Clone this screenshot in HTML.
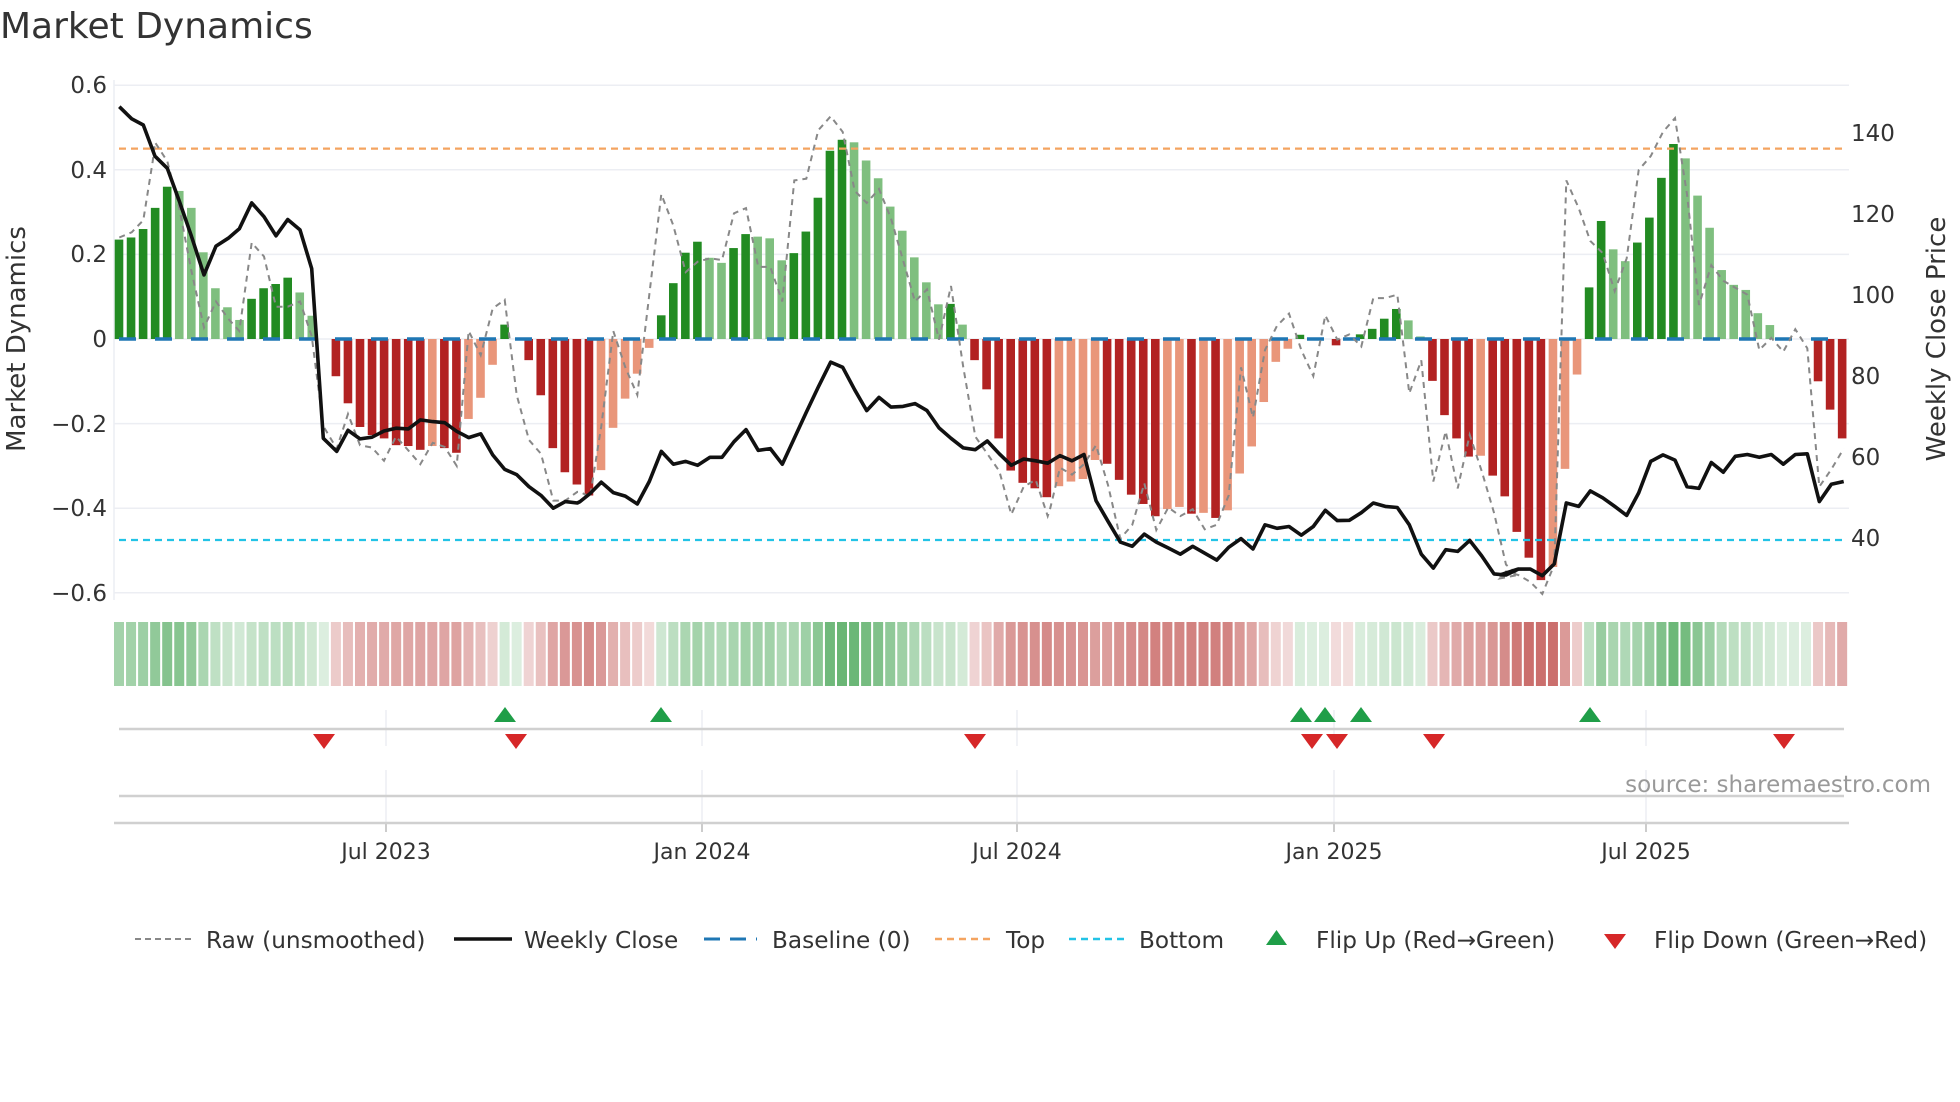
<!DOCTYPE html>
<html><head><meta charset="utf-8"><style>
html,body{margin:0;padding:0;background:#fff;}
svg{display:block;font-family:"DejaVu Sans","Liberation Sans",sans-serif;}
</style></head><body>
<svg id="s" width="1960" height="1102" viewBox="0 0 1960 1102" xmlns="http://www.w3.org/2000/svg">
<rect width="1960" height="1102" fill="#fff"/>
<text x="0" y="38" font-size="36" fill="#333">Market Dynamics</text>
<g id="grid" stroke="#eceef3" stroke-width="1.5"></g>
<g id="heat"></g>
<g id="bars"></g>
<g id="lines"></g>
<g font-size="23" fill="#333" text-anchor="end">
<text x="107" y="93">0.6</text><text x="107" y="178">0.4</text><text x="107" y="262">0.2</text><text x="107" y="347">0</text><text x="107" y="432">−0.2</text><text x="107" y="516">−0.4</text><text x="107" y="601">−0.6</text>
</g>
<g font-size="23" fill="#333">
<text x="1851" y="141">140</text><text x="1851" y="222">120</text><text x="1851" y="303">100</text><text x="1851" y="384">80</text><text x="1851" y="465">60</text><text x="1851" y="546">40</text>
</g>
<text transform="translate(25,339) rotate(-90)" font-size="26" fill="#333" text-anchor="middle">Market Dynamics</text>
<text transform="translate(1945,339) rotate(-90)" font-size="26" fill="#333" text-anchor="middle">Weekly Close Price</text>
<g font-size="22" fill="#333" text-anchor="middle">
<text x="386" y="859">Jul 2023</text><text x="702" y="859">Jan 2024</text><text x="1017" y="859">Jul 2024</text><text x="1334" y="859">Jan 2025</text><text x="1646" y="859">Jul 2025</text>
</g>
<text x="1931" y="792" font-size="23" fill="#999" text-anchor="end">source: sharemaestro.com</text>
<g id="legend" font-size="23.2" fill="#333">
<line x1="135" y1="939" x2="191" y2="939" stroke="#888" stroke-width="2" stroke-dasharray="6,4"/><text x="206" y="948">Raw (unsmoothed)</text>
<line x1="454" y1="939" x2="512" y2="939" stroke="#111" stroke-width="3.5"/><text x="524" y="948">Weekly Close</text>
<line x1="704" y1="939" x2="757" y2="939" stroke="#1f77b4" stroke-width="3" stroke-dasharray="16,10"/><text x="772" y="948">Baseline (0)</text>
<line x1="935" y1="939" x2="991" y2="939" stroke="#f4a460" stroke-width="2.5" stroke-dasharray="7,5"/><text x="1006" y="948">Top</text>
<line x1="1069" y1="939" x2="1125" y2="939" stroke="#22c3e6" stroke-width="2.5" stroke-dasharray="7,5"/><text x="1139" y="948">Bottom</text>
<polygon points="1266,945 1287,945 1276.5,930" fill="#1f9e48"/><text x="1316" y="948">Flip Up (Red→Green)</text>
<polygon points="1604,934 1626,934 1615,949" fill="#d62728"/><text x="1654" y="948">Flip Down (Green→Red)</text>
</g>
<g id="marks"></g>
</svg>
<script>
var NS="http://www.w3.org/2000/svg";
function el(p,t,a){var e=document.createElementNS(NS,t);for(var k in a)e.setAttribute(k,a[k]);document.getElementById(p).appendChild(e);return e;}
function Y(v){return 339-v*423;}
[0.6,0.4,0.2,0,-0.2,-0.4,-0.6].forEach(function(v){el("grid","line",{x1:114,x2:1849,y1:Y(v),y2:Y(v)});});
el("grid","line",{x1:114,x2:114,y1:80,y2:600});
[386,702,1017,1334,1646].forEach(function(x){el("grid","line",{x1:x,x2:x,y1:710,y2:746});el("grid","line",{x1:x,x2:x,y1:770,y2:823});el("grid","line",{x1:x,x2:x,y1:823,y2:832,stroke:"#bbb"});});
el("grid","line",{x1:119,x2:1844,y1:729,y2:729,stroke:"#d0d0d0","stroke-width":2.5});
el("grid","line",{x1:119,x2:1844,y1:796,y2:796,stroke:"#d0d0d0","stroke-width":2.5});
el("grid","line",{x1:114,x2:1849,y1:823,y2:823,stroke:"#d0d0d0","stroke-width":2.5});
var B=[[.235,1],[.24,1],[.26,1],[.31,1],[.36,1],[.35,0],[.31,0],[.205,0],[.12,0],[.075,0],[.045,0],[.095,1],[.12,1],[.13,1],[.145,1],[.11,0],[.055,0],
[0,0],[-.088,1],[-.152,1],[-.208,1],[-.227,1],[-.235,1],[-.251,1],[-.253,1],[-.262,1],[-.253,0],[-.258,1],[-.269,1],[-.189,0],[-.139,0],[-.061,0],[.034,1],[0,0],[-.05,1],[-.133,1],[-.258,1],[-.315,1],[-.344,1],
[-.37,1],[-.31,0],[-.21,0],[-.141,0],[-.082,0],[-.021,0],[.056,1],[.132,1],[.204,1],[.23,1],[.192,0],[.18,0],[.215,1],[.248,1],[.242,0],[.238,0],[.186,0],[.203,1],[.254,1],[.334,1],[.445,1],[.471,1],[.465,0],[.422,0],[.38,0],[.313,0],[.256,0],[.193,0],[.134,0],[.082,0],[.083,1],[.034,0],
[-.05,1],[-.119,1],[-.235,1],[-.311,1],[-.34,1],[-.353,1],[-.374,1],[-.348,0],[-.337,0],[-.331,0],[-.286,0],[-.295,1],[-.333,1],[-.368,1],[-.39,1],[-.419,1],[-.402,0],[-.397,0],[-.413,1],[-.411,0],[-.423,1],[-.405,0],[-.318,0],[-.254,0],[-.149,0],[-.054,0],[-.023,0],[.01,1],[0,0],[0,0],[-.015,1],[0,0],[.011,1],[.024,1],[.048,1],[.071,1],[.044,0],[.006,0],
[-.099,1],[-.18,1],[-.235,1],[-.278,1],[-.276,0],[-.323,1],[-.372,1],[-.456,1],[-.517,1],[-.57,1],[-.539,0],[-.307,0],[-.084,0],[.122,1],[.279,1],[.212,0],[.184,0],[.228,1],[.287,1],[.381,1],[.461,1],[.427,0],[.339,0],[.263,0],[.163,0],[.128,0],[.116,0],[.061,0],[.033,0],[0,0],[0,0],[0,0],[-.1,1],[-.167,1],[-.235,1]];
function X(i){return 119+12.05*i;}
function mix(c,t){return "rgb("+c.map(function(x){return Math.round(255-(255-x)*t);}).join(",")+")";}
var last=1;
B.forEach(function(b,i){var v=b[0],x=X(i);
 if(v!==0){var col=v>0?(b[1]?"#228b22":"#7fbf7f"):(b[1]?"#b22222":"#e9967a");
  el("bars","rect",{x:x-4.3,width:8.6,y:Math.min(Y(v),Y(0)),height:Math.abs(Y(v)-Y(0)),fill:col});last=v>0?1:-1;}
 var s=v===0?last:(v>0?1:-1);var t=0.18+0.62*Math.min(1,Math.abs(v)/0.5);
 var base=s>0?[60,160,75]:[190,75,72];
 el("heat","rect",{x:x-5,width:10,y:622,height:64,fill:mix(base,t)});
});
el("lines","line",{x1:119,x2:1844,y1:Y(0),y2:Y(0),stroke:"#1f77b4","stroke-width":3.5,"stroke-dasharray":"17,19"});
el("lines","line",{x1:119,x2:1844,y1:Y(0.45),y2:Y(0.45),stroke:"#f4a460","stroke-width":2.2,"stroke-dasharray":"7,5"});
el("lines","line",{x1:119,x2:1844,y1:540,y2:540,stroke:"#22c3e6","stroke-width":2.2,"stroke-dasharray":"7,5"});
function pts(groups){var o=[];groups.forEach(function(g){var ox=g[0],p=g[1];for(var i=0;i<p.length;i+=2)o.push((ox+p[i]/3).toFixed(1)+","+(80+p[i+1]/2.889).toFixed(1));});return o.join(" ");}
var raw=[[110,[28,455,65,440,100,405,128,235,135,180,172,235,208,370,244,550,282,715,318,640,355,690,388,725,425,470,462,510,498,655,533,655,570,640,605,740,640,1000,680,1065,714,965,750,1055,786,1062,822,1100,858,1030,895,1070,931,1110,968,1048,1004,1060,1040,1115,1076,725,1112,795,1148,660,1184,635,1220,910,1257,1040,1293,1080,1330,1215,1366,1215,1402,1190]],
[580,[0,1190,30,1205,64,1000,100,725,136,830,172,910,208,620,244,330,280,420,317,555,353,525,390,515,426,520,462,385,498,370,535,540,571,540,607,640,643,290,679,285,715,145,752,105,788,150,824,320,860,355,897,315,933,400,969,520,1005,640,1041,605,1077,750,1113,595,1150,830,1186,1030,1222,1080,1258,1130,1294,1255,1331,1175,1367,1155,1403,1260]],
[1050,[0,1240,30,1120,66,1140,102,1110,138,1055,174,1170,211,1325,247,1285,283,1165,319,1300,355,1235,391,1260,428,1240,464,1298,500,1285,536,1200,573,830,609,975,645,780,681,710,717,675,754,780,790,855,826,680,862,750,898,735,934,770,970,630,1006,630,1042,620,1078,905,1114,810,1150,1160,1187,1015,1223,1180,1259,1025,1295,1130,1332,1250,1368,1400,1404,1430]],
[1500,[0,1440,18,1420,55,1430,91,1450,127,1485,163,1400,199,290,236,370,271,465,308,500,344,610,380,515,416,260,452,220,489,150,525,110,561,330,597,650,634,535,670,580,706,600,742,620,778,780,814,745,850,785,886,720,922,775,958,1175,994,1125,1031,1065]]];
el("lines","polyline",{points:pts(raw),fill:"none",stroke:"#888","stroke-width":2,"stroke-dasharray":"6,5"});
var cl=[[110,[28,77,65,112,100,130,135,220,172,255,208,350,244,450,282,563,318,480,355,457,388,430,425,355,462,395,498,450,533,403,570,433,605,545,640,1035,680,1073,714,1012,750,1037,786,1032,822,1014,858,1006,895,1008,931,982,968,987,1004,990,1040,1015,1076,1033,1112,1022,1148,1083,1184,1125,1220,1140,1257,1175,1293,1200,1330,1237,1366,1218,1402,1222]],
[580,[0,1218,30,1195,64,1162,100,1192,136,1202,172,1225,208,1160,244,1073,280,1110,317,1102,353,1113,390,1090,426,1090,462,1045,498,1010,535,1070,571,1065,607,1110,643,1035,679,960,715,887,752,815,788,830,824,895,860,955,897,917,933,945,969,943,1005,935,1041,955,1077,1005,1113,1035,1150,1063,1186,1068,1222,1043,1258,1080,1294,1113,1331,1095,1367,1100,1403,1107]],
[1050,[0,1103,30,1085,66,1100,102,1082,138,1215,174,1275,211,1335,247,1347,283,1312,319,1335,355,1352,391,1370,428,1347,464,1367,500,1387,536,1350,573,1325,609,1355,645,1285,681,1295,717,1290,754,1315,790,1290,826,1243,862,1273,898,1272,934,1250,970,1222,1006,1232,1042,1235,1078,1285,1114,1370,1150,1410,1187,1357,1223,1362,1259,1330,1295,1375,1332,1427,1368,1430,1404,1413]],
[1500,[0,1430,18,1430,55,1413,91,1413,127,1432,163,1398,199,1222,236,1232,271,1187,308,1207,344,1232,380,1258,416,1193,452,1102,489,1083,525,1098,561,1175,597,1180,634,1105,670,1133,706,1087,742,1082,778,1090,814,1082,850,1110,886,1082,922,1080,958,1218,994,1168,1031,1160]]];
el("lines","polyline",{points:pts(cl),fill:"none",stroke:"#111","stroke-width":3.6,"stroke-linejoin":"round"});
[505,661,1301,1325,1361,1590].forEach(function(x){el("marks","polygon",{points:(x-11)+",722 "+(x+11)+",722 "+x+",707",fill:"#1f9e48"});});
[324,516,975,1312,1337,1434,1784].forEach(function(x){el("marks","polygon",{points:(x-11)+",734 "+(x+11)+",734 "+x+",749",fill:"#d62728"});});
</script>
</body></html>
